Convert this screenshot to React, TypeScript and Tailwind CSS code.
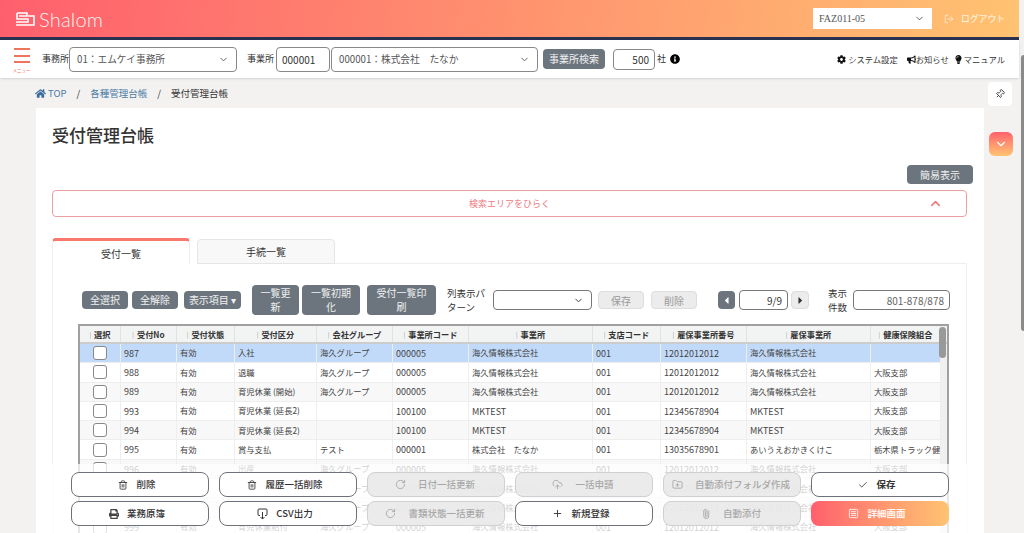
import { ChevronDown, ChevronUp, LogOut, Pin, Trash2, RotateCw, Plus, Check, Paperclip, FolderPlus, CloudUpload, SquareMenu } from "lucide-react";
import { FaBullhorn, FaCaretLeft, FaCaretRight, FaCog, FaHome, FaInfoCircle, FaLightbulb, FaPrint } from "react-icons/fa";

const jp = "font-['Noto_Sans_CJK_JP','Noto_Sans',sans-serif]";

const cols = [
  { name: "選択", w: "w-[41px]" },
  { name: "受付No", w: "w-[56px]" },
  { name: "受付状態", w: "w-[58px]" },
  { name: "受付区分", w: "w-[82px]" },
  { name: "会社グループ", w: "w-[76px]" },
  { name: "事業所コード", w: "w-[76px]" },
  { name: "事業所", w: "w-[124px]" },
  { name: "支店コード", w: "w-[68px]" },
  { name: "雇保事業所番号", w: "w-[86px]" },
  { name: "雇保事業所", w: "w-[124px]" },
  { name: "健康保険組合", w: "w-[70px]" },
];

const rows = [
  ["987", "有効", "入社", "海久グループ", "000005", "海久情報株式会社", "001", "12012012012", "海久情報株式会社", ""],
  ["988", "有効", "退職", "海久グループ", "000005", "海久情報株式会社", "001", "12012012012", "海久情報株式会社", "大阪支部"],
  ["989", "有効", "育児休業 (開始)", "海久グループ", "000005", "海久情報株式会社", "001", "12012012012", "海久情報株式会社", "大阪支部"],
  ["993", "有効", "育児休業 (延長2)", "", "100100", "MKTEST", "001", "12345678904", "MKTEST", "大阪支部"],
  ["994", "有効", "育児休業 (延長2)", "", "100100", "MKTEST", "001", "12345678904", "MKTEST", "大阪支部"],
  ["995", "有効", "賞与支払", "テスト", "000001", "株式会社　たなか", "001", "13035678901", "あいうえおかきくけこ", "栃木県トラック健康"],
  ["996", "有効", "出産", "海久グループ", "000005", "海久情報株式会社", "001", "12012012012", "海久情報株式会社", "大阪支部"],
  ["997", "有効", "出産", "海久グループ", "000005", "海久情報株式会社", "001", "12012012012", "海久情報株式会社", "大阪支部"],
  ["998", "有効", "出産", "海久グループ", "000005", "海久情報株式会社", "001", "12012012012", "海久情報株式会社", "大阪支部"],
  ["999", "有効", "育児休業給付", "海久グループ", "000005", "海久情報株式会社", "001", "12012012012", "海久情報株式会社", "大阪支部"],
];

const GrayBtn = ({ label, className = "" }: { label: string; className?: string }) => (
  <button className={`bg-[#6c757d] text-white/90 rounded text-[10px] leading-[14px] ${className}`}>{label}</button>
);

const ActionBtn = ({ icon, label, disabled, bold }: { icon: React.ReactNode; label: string; disabled?: boolean; bold?: boolean }) => (
  <button
    className={`w-[138px] shrink-0 h-[25px] rounded-lg border flex items-center justify-center text-[9.5px] ${
      disabled ? "gap-[12px] pr-[2px] bg-[#e9e9e9]/90 border-[#d0d0d0] text-[#a8a8a8]" : "gap-[8px] pr-[6px] bg-white border-[#6d7278] text-[#333]"
    } ${bold ? "font-semibold" : "font-medium"}`}
  >
    {icon}
    <span>{label}</span>
  </button>
);

const CsvIcon = () => (
  <svg width="11" height="12" viewBox="0 0 11 12" fill="none" stroke="currentColor" strokeWidth="1">
    <path d="M3 7.5H2a1 1 0 0 1-1-1V2a1 1 0 0 1 1-1h7a1 1 0 0 1 1 1v4.5a1 1 0 0 1-1 1H8" />
    <path d="M5.5 4v7M3.5 9l2 2 2-2" />
  </svg>
);

const Logo = () => (
  <svg width="19" height="14" viewBox="0 0 19 14" fill="none" stroke="white" strokeWidth="1.6">
    <path d="M1 1h10v3H3" />
    <path d="M1 1v6h11v3H0" />
    <path d="M12 4h6v9H0" />
  </svg>
);

export default function App() {
  return (
    <div className={`relative h-[533px] w-[1024px] overflow-hidden bg-[#f3f2f1] flex flex-col text-[#333] ${jp}`}>
      {/* header */}
      <header className="shrink-0 w-[1019px] h-[40px] flex items-center pl-[16px] pr-[14px] border-b-[3px] border-[#2a3252] bg-[linear-gradient(97deg,#ff5f6d,#ffc371)]">
        <Logo />
        <span className="ml-[4px] text-white/95 text-[20px] tracking-[0.2px] font-['Lato',sans-serif] font-light">Shalom</span>
        <div className="ml-auto flex items-center">
          <div className="w-[119px] h-[21px] bg-white flex items-center justify-between pl-[6px] pr-[7px] text-[10px] text-[#555] font-['Liberation_Serif',serif]">
            FAZ011-05
            <ChevronDown size={11} strokeWidth={2} />
          </div>
          <div className="ml-[12px] flex items-center gap-[7px] text-white/75 text-[8.8px] font-medium">
            <LogOut size={10} />
            ログアウト
          </div>
        </div>
      </header>

      {/* toolbar */}
      <div className="shrink-0 w-[1019px] h-[38px] bg-white flex items-center text-[9px] shadow-sm">
        <div className="w-[41px] flex flex-col items-center pl-[2px] text-[#f26b5b] mr-[1px] mt-[3px]">
          <div className="w-[16px] flex flex-col gap-[4.5px]">
            <div className="h-[2px] bg-[#f0755f]" />
            <div className="h-[2px] bg-[#f0755f]" />
            <div className="h-[2px] bg-[#f0755f]" />
          </div>
          <span className="text-[4.5px] mt-[4px] leading-[6px]">メニュー</span>
        </div>
        <span className="w-[27px] whitespace-nowrap">事務所</span>
        <div className="w-[168px] h-[25px] border border-[#888] rounded-sm flex items-center justify-between pl-[7px] pr-[7px] text-[9.7px] text-[#555]">
          01：エムケイ事務所
          <ChevronDown size={11} />
        </div>
        <span className="ml-[10px] w-[29px] whitespace-nowrap">事業所</span>
        <div className="w-[54px] h-[25px] border border-[#888] rounded-sm flex items-center pl-[5px] text-[10px]">000001</div>
        <div className="ml-[1px] w-[207px] h-[25px] border border-[#888] rounded-sm flex items-center justify-between pl-[7px] pr-[7px] text-[9.7px] text-[#555]">
          000001：株式会社　たなか
          <ChevronDown size={11} />
        </div>
        <GrayBtn label="事業所検索" className="ml-[5px] w-[62px] h-[20px]" />
        <div className="ml-[8px] w-[42px] h-[21px] border border-[#888] rounded-sm flex items-center justify-end pr-[5px] text-[10px]">500</div>
        <span className="ml-[2px]">社</span>
        <FaInfoCircle size={10} className="ml-[4px] text-black" />
        <div className="ml-auto mr-[14px] flex items-center text-[8.3px]">
          <span className="flex items-center gap-[2px]"><FaCog size={9} className="text-[#111]" />システム設定</span>
          <span className="ml-[9px] flex items-center"><FaBullhorn size={9} className="text-[#111]" />お知らせ</span>
          <span className="ml-[5px] flex items-center gap-[1px]"><FaLightbulb size={9} className="text-[#111]" />マニュアル</span>
        </div>
      </div>

      {/* breadcrumb */}
      <div className="shrink-0 w-[1019px] h-[30px] flex items-center pl-[35px] pr-[7px] text-[9.5px]">
        <FaHome size={11} className="text-[#3d6d9a]" />
        <span className="ml-[2px] text-[#4a7ba6]">TOP</span>
        <span className="mx-[10px]">/</span>
        <span className="text-[#4a7ba6]">各種管理台帳</span>
        <span className="mx-[10px]">/</span>
        <span>受付管理台帳</span>
        <div className="ml-auto w-[24px] h-[24px] bg-white rounded flex items-center justify-center mt-[2px]">
          <Pin size={10} className="rotate-45" />
        </div>
      </div>

      {/* main card */}
      <main className="ml-[36px] w-[948px] flex-1 bg-white pl-[16px] pr-[17px] pt-[15px]">
        <h1 className="text-[17px] leading-[24px] font-medium text-[#333]">受付管理台帳</h1>
        <div className="flex justify-end mt-[18px]">
          <GrayBtn label="簡易表示" className="w-[66px] h-[19px] mr-[-6px]" />
        </div>
        <div className="mt-[6px] h-[27px] border border-[#eda0a4] rounded-sm flex items-center relative justify-center text-[9px] text-[#ee7a7f]">
          検索エリアをひらく
          <ChevronUp size={15} strokeWidth={2.5} className="absolute right-[23px]" />
        </div>

        <div className="mt-[21px] flex h-[26px] text-[10px] items-end">
          <div className="w-[138px] h-[26px] pt-[1px] bg-white rounded-t border-t-[3px] border-[#f8796c] border-x border-x-[#eee] flex items-center justify-center">受付一覧</div>
          <div className="ml-[7px] w-[138px] h-[25px] bg-[#f8f8f8] border border-[#e5e5e5] rounded-t flex items-center justify-center">手続一覧</div>
          <div className="flex-1 border-b border-[#eee]" />
        </div>

        <div className="border-l border-r border-[#eee] pl-[29px] pr-[16px] pt-[21px]">
          <div className="flex items-center h-[30px] text-[10px]">
            <GrayBtn label="全選択" className="w-[46px] h-[18px]" />
            <GrayBtn label="全解除" className="ml-[4px] w-[46px] h-[18px]" />
            <GrayBtn label="表示項目 ▾" className="ml-[6px] w-[57px] h-[18px]" />
            <GrayBtn label="一覧更新" className="ml-[11px] w-[47px] h-[30px] px-[8px]" />
            <GrayBtn label="一覧初期化" className="ml-[3px] w-[58px] h-[30px] px-[6px]" />
            <GrayBtn label="受付一覧印刷" className="ml-[7px] w-[69px] h-[30px] px-[6px]" />
            <span className="ml-[11px] w-[46px] text-[9.5px] leading-[14px]">列表示パターン</span>
            <div className="w-[99px] h-[20px] border border-[#777] rounded-sm flex items-center justify-end pr-[7px]"><ChevronDown size={11} /></div>
            <button className="ml-[6px] w-[46px] h-[18px] bg-[#ececec] border border-[#ddd] rounded text-[#999]">保存</button>
            <button className="ml-[7px] w-[46px] h-[18px] bg-[#ececec] border border-[#ddd] rounded text-[#999]">削除</button>
            <button className="ml-[21px] w-[17px] h-[18px] bg-[#6c757d] rounded flex items-center justify-center"><FaCaretLeft size={11} className="text-white" /></button>
            <div className="ml-[4px] w-[49px] h-[20px] border border-[#777] rounded-sm flex items-center justify-end pr-[5px]">9/9</div>
            <button className="ml-[3px] w-[18px] h-[18px] bg-[#ececec] border border-[#ddd] rounded flex items-center justify-center"><FaCaretRight size={11} className="text-[#333]" /></button>
            <span className="ml-[19px] w-[25px] leading-[14px] text-[9.5px]">表示件数</span>
            <div className="w-[97px] h-[20px] border border-[#777] rounded-sm flex items-center justify-end pr-[5px] text-[#666]">801-878/878</div>
          </div>

          {/* table */}
          <div className="relative mt-[9px] ml-[-4px] w-[871px] border-2 border-[#a0a0a0] border-b-0 text-[9px]">
            <div className="flex h-[18px] bg-[#f2f4f4] border-b-2 border-[#ccc] font-bold text-[#333] text-[8.2px]">
              {cols.map((c) => (
                <div key={c.name} className={`${c.w} shrink-0 flex items-center justify-center border-r border-[#e2e2e2] whitespace-nowrap overflow-hidden`}>
                  <span className="text-[#999] font-normal text-[6px] mr-[3px]">|</span>{c.name}
                </div>
              ))}
              <div className="w-[10px] bg-[#f0f0f0]" />
            </div>
            {rows.map((r, i) => (
              <div key={r[0]} className={`flex h-[19.3px] border-b border-[#eee] ${i === 0 ? "bg-[#c2daf9]" : i % 2 === 0 ? "bg-[#f8f8f8]" : "bg-white"}`}>
                <div className="w-[41px] shrink-0 flex items-center justify-center border-r border-[#eee]">
                  <div className="w-[14px] h-[14px] bg-white border border-[#888] rounded-[3px]" />
                </div>
                {r.map((v, j) => (
                  <div key={j} className={`${cols[j + 1].w} shrink-0 flex items-center pl-[3px] border-r border-[#eee] whitespace-nowrap overflow-hidden text-[#444] ${/^[\w-]+$/.test(v) ? "text-[9px] pt-[1px]" : "text-[8.3px] pb-[1px]"}`}>{v}</div>
                ))}
                <div className="w-[10px] bg-[#f0f0f0]" />
              </div>
            ))}
            <div className="absolute right-[1px] top-[1px] w-[7px] h-[31px] bg-[#999] rounded" />
          </div>
        </div>
      </main>

      {/* right floating toggle */}
      <div className="absolute left-[989px] top-[132px] w-[24px] h-[24px] rounded-md bg-gradient-to-b from-[#ff5f6d] to-[#ffc371] flex items-center justify-center">
        <ChevronDown size={14} className="text-white" />
      </div>

      {/* page scrollbar */}
      <div className="absolute right-0 top-[55px] w-[3px] h-[276px] bg-[#8a8a8a] rounded-l" />

      {/* bottom action bar */}
      <div className="absolute left-[36px] w-[948px] bottom-0 h-[69px] bg-white/75 pl-[35px] pr-[35px] pt-[8px] flex flex-col gap-[4px]">
        <div className="flex gap-[10px]">
          <ActionBtn icon={<Trash2 size={10} />} label="削除" />
          <ActionBtn icon={<Trash2 size={10} />} label="履歴一括削除" />
          <ActionBtn icon={<RotateCw size={11} />} label="日付一括更新" disabled />
          <ActionBtn icon={<CloudUpload size={11} />} label="一括申請" disabled />
          <ActionBtn icon={<FolderPlus size={11} />} label="自動添付フォルダ作成" disabled />
          <ActionBtn icon={<Check size={10} />} label="保存" bold />
        </div>
        <div className="flex gap-[10px]">
          <ActionBtn icon={<FaPrint size={10} className="text-[#444]" />} label="業務原簿" />
          <ActionBtn icon={<CsvIcon />} label="CSV出力" />
          <ActionBtn icon={<RotateCw size={11} />} label="書類状態一括更新" disabled />
          <ActionBtn icon={<Plus size={11} />} label="新規登録" />
          <ActionBtn icon={<Paperclip size={10} className="rotate-[-45deg]" />} label="自動添付" disabled />
          <button className="w-[138px] shrink-0 h-[25px] rounded-lg pr-[6px] bg-gradient-to-r from-[#ff5f6d] to-[#ffc371] text-white/90 text-[9.5px] font-semibold flex items-center justify-center gap-[8px]">
            <SquareMenu size={11} />詳細画面
          </button>
        </div>
      </div>
    </div>
  );
}
